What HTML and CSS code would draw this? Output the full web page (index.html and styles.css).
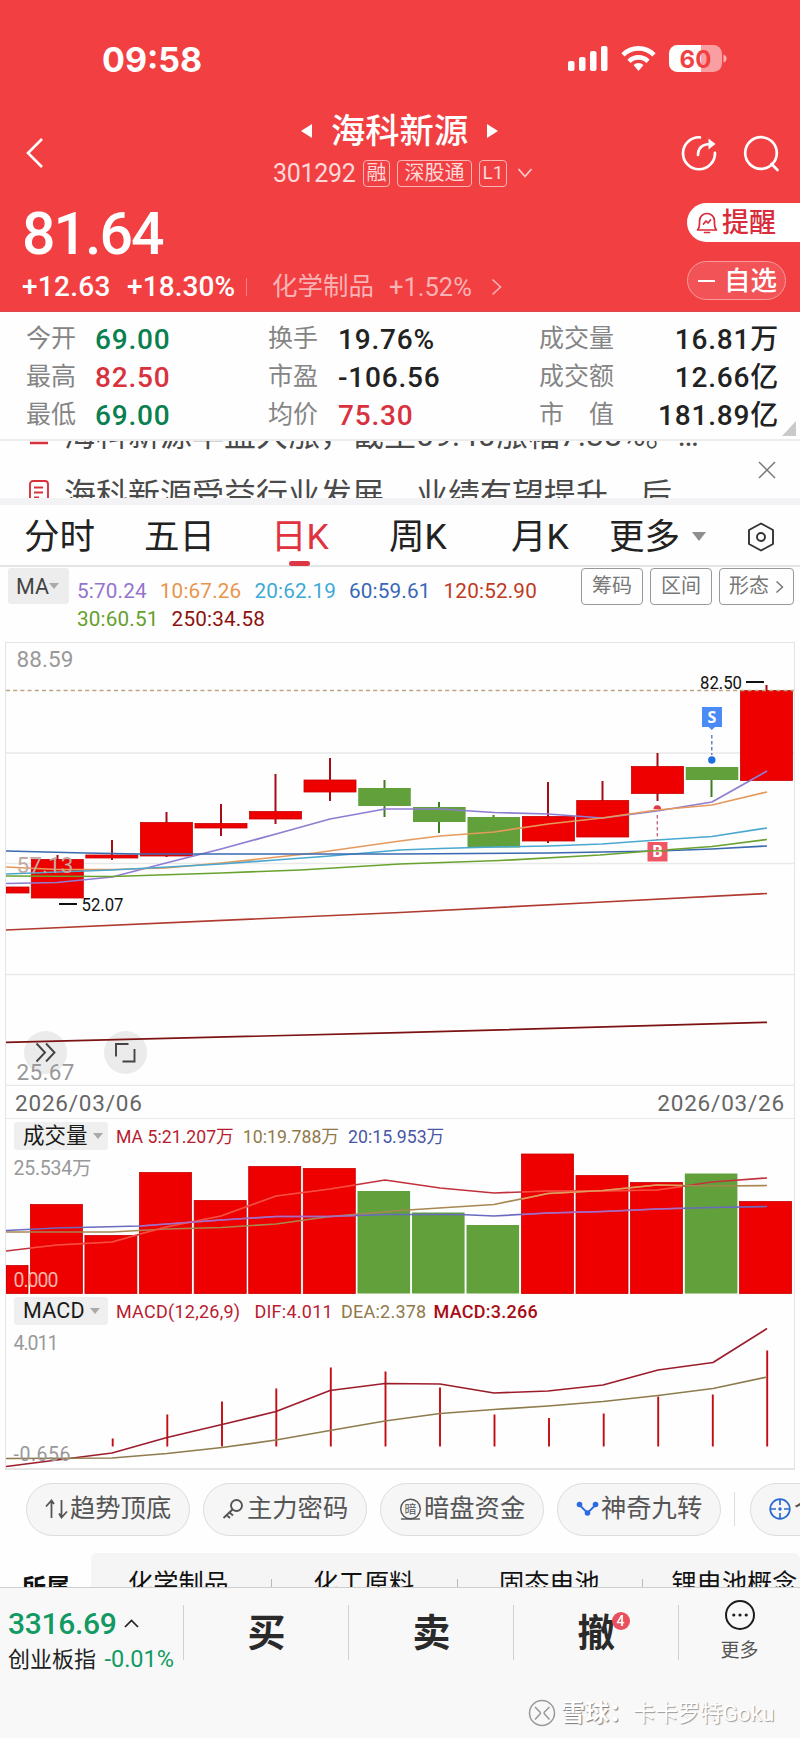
FILE: index.html
```html
<!DOCTYPE html>
<html lang="zh-CN">
<head>
    <meta charset="UTF-8">
    <meta name="viewport" content="width=device-width, initial-scale=1.0">
    <title>海科新源 301292</title>
    <link rel="stylesheet" href="styles.css">
</head>
<body>

<header class="top">
    <div class="status">
        <span class="clock">09:58</span>
        <svg class="status-icons" width="160" height="30" viewBox="567 44 160 30">
            <g fill="#fff">
                <rect x="568" y="61" width="6.500" height="10" rx="2"/>
                <rect x="579" y="57" width="6.500" height="14" rx="2"/>
                <rect x="590" y="51" width="6.500" height="20" rx="2"/>
                <rect x="601" y="46" width="6.500" height="25" rx="2"/>
                <path d="M638.500 71l-5-6a7.500 7.500 0 0 1 10 0z"/>
                <rect x="669" y="45" width="53" height="27" rx="8.500" opacity=".5"/>
                <path d="M677.500 45H701v27h-23.500a8.500 8.500 0 0 1-8.500-8.500v-10a8.500 8.500 0 0 1 8.500-8.500z"/>
                <path d="M723.500 54.500q3 1 3 4t-3 4z" opacity=".6"/>
            </g>
            <g fill="none" stroke="#fff" stroke-width="4.600">
                <path d="M623 54.800a22 22 0 0 1 31 0"/>
                <path d="M629 61.300a13.500 13.500 0 0 1 19 0"/>
            </g>
            <text x="695.500" y="67.500" class="battery-text">60</text>
        </svg>
    </div>

    <div class="nav">
        <svg class="back" width="20" height="32" viewBox="0 0 20 32"><path d="M17 2L3 16l14 14" fill="none" stroke="#fff" stroke-width="2.600"/></svg>
        <div class="title">
            <div class="name">
                <svg width="13" height="16" viewBox="0 0 13 16"><path d="M12 1v14L1 8z" fill="#fff"/></svg>
                <h1>海科新源</h1>
                <svg width="13" height="16" viewBox="0 0 13 16"><path d="M1 1v14l11-7z" fill="#fff"/></svg>
            </div>
            <div class="code">
                <span class="num">301292</span>
                <span class="tag">融</span>
                <span class="tag tag-wide">深股通</span>
                <span class="tag tag-l1">L1</span>
                <svg width="16" height="12" viewBox="0 0 16 12"><path d="M1.500 2L8 9.500 14.500 2" fill="none" stroke="#fbc9ca" stroke-width="1.800"/></svg>
            </div>
        </div>
        <svg class="nav-icons" width="100" height="38" viewBox="679 135 100 38">
            <g fill="none" stroke="#fff" stroke-width="2.700" stroke-linecap="round" stroke-linejoin="round">
                <path d="M699 137.300a16 16 0 1 0 15 15.500"/>
                <path d="M697 155c0-7.500 4-11 13.500-11"/>
                <circle cx="760" cy="153" r="15.800"/>
                <path d="M770.500 164l6 6"/>
            </g>
            <path d="M707.500 138.500l7 5.500-7 5.500z" fill="#fff"/>
        </svg>
    </div>

    <div class="quote">
        <div class="quote-main">
            <div class="price">81.64</div>
            <div class="change">
                <span class="diff">+12.63</span>
                <span class="pct">+18.30%</span>
                <span class="bar"></span>
                <span class="sector">化学制品</span>
                <span class="sector-pct">+1.52%</span>
                <svg width="11" height="18" viewBox="0 0 11 18"><path d="M1.500 1.500L9.500 9l-8 7.500" fill="none" stroke="#f9b3b4" stroke-width="1.600"/></svg>
            </div>
        </div>
        <div class="quote-side">
            <div class="remind">
                <svg width="22" height="22" viewBox="0 0 22 22"><g fill="none" stroke="#d92b3a" stroke-width="1.700" stroke-linecap="round" stroke-linejoin="round"><path d="M1.500 18h19c-1.500-1.500-2-3-2-6V9a7.500 7.500 0 0 0-15 0v3c0 3-.5 4.500-2 6z"/><path d="M7.500 12l2.500-3 2 2 2.500-3M8.500 20.500h5"/></g></svg>
                <span>提醒</span>
            </div>
            <div class="watch"><i class="minus"></i><span>自选</span></div>
        </div>
    </div>
</header>

<section class="stats">
    <span class="label">今开</span><span class="value green">69.00</span>
    <span class="label">换手</span><span class="value">19.76%</span>
    <span class="label">成交量</span><span class="value end">16.81万</span>
    <span class="label">最高</span><span class="value red">82.50</span>
    <span class="label">市盈</span><span class="value">-106.56</span>
    <span class="label">成交额</span><span class="value end">12.66亿</span>
    <span class="label">最低</span><span class="value green">69.00</span>
    <span class="label">均价</span><span class="value red">75.30</span>
    <span class="label">市　值</span><span class="value end">181.89亿</span>
    <i class="corner"></i>
</section>

<section class="news">
    <div class="news-list">
        <div class="news-row">
            <svg width="22" height="26" viewBox="0 0 22 26"><path d="M2 24h18" stroke="#d8323f" stroke-width="2.500"/></svg>
            <span>海科新源早盘大涨，截至09:40涨幅7.38%。…</span>
        </div>
        <div class="news-row">
            <svg width="22" height="26" viewBox="0 0 22 26"><g fill="none" stroke="#d8323f" stroke-width="1.900"><path d="M2 26V5a3 3 0 0 1 3-3h12a3 3 0 0 1 3 3v21M6 8.500h9M6 13.500h9M6 18.500h5"/></g></svg>
            <span>海科新源受益行业发展，业绩有望提升，后</span>
        </div>
    </div>
    <svg class="close" width="18" height="18" viewBox="0 0 18 18"><path d="M1 1l16 16M17 1L1 17" stroke="#777" stroke-width="1.500"/></svg>
</section>

<nav class="tabs">
    <span class="tab">分时</span>
    <span class="tab">五日</span>
    <span class="tab active">日K</span>
    <span class="tab">周K</span>
    <span class="tab">月K</span>
    <span class="tab">更多</span>
    <i class="caret"></i>
    <svg class="gear" width="28" height="30" viewBox="0 0 28 30"><g fill="none" stroke="#333" stroke-width="1.900" stroke-linejoin="round"><path d="M14 1.500L26 8v14l-12 6.500L2 22V8z"/><circle cx="14" cy="15" r="4"/></g></svg>
</nav>

<section class="ma">
    <span class="ma-btn">MA<i class="caret small"></i></span>
    <div class="ma-list">
        <span class="ma5">5:70.24</span>
        <span class="ma10">10:67.26</span>
        <span class="ma20">20:62.19</span>
        <span class="ma60">60:59.61</span>
        <span class="ma120">120:52.90</span>
        <span class="ma30">30:60.51</span>
        <span class="ma250">250:34.58</span>
    </div>
    <div class="ma-tools">
        <span class="tool">筹码</span>
        <span class="tool">区间</span>
        <span class="tool wide">形态 <svg width="9" height="14" viewBox="0 0 9 14"><path d="M1.500 1.500L7.500 7l-6 5.500" fill="none" stroke="#777" stroke-width="1.500"/></svg></span>
    </div>
</section>

<section class="charts">
    <!-- K line -->
    <svg class="chart" width="788" height="443" viewBox="6 643 788 443">
        <g stroke="#e9e9e9" stroke-width="1.300">
            <path d="M6 753h788M6 863.500h788M6 974.500h788M6 1085.300h788"/>
        </g>
        <circle cx="45.500" cy="1052.500" r="21.500" fill="#ebebeb"/>
        <circle cx="125.500" cy="1052.500" r="21.500" fill="#ebebeb"/>
        <g stroke="#a30d16" stroke-width="2">
            <path d="M57.500 855v5M112 840v20M166.500 812v45M221 804v32M275.500 774v50M330 758v43M548 782v61M602.500 781v20M657.500 753v48M766.500 685v6"/>
        </g>
        <g stroke="#3f7d22" stroke-width="2">
            <path d="M384.500 780v37M439 802v31M493.500 815v4M711.500 779v18"/>
        </g>
        <g fill="#ee0000" stroke="#c80000" stroke-width=".8">
            <rect x="6" y="887" width="23" height="6"/>
            <rect x="31.300" y="859.500" width="52" height="38.500"/>
            <rect x="85.800" y="855" width="52" height="3"/>
            <rect x="140.400" y="822.500" width="52" height="33.500"/>
            <rect x="195" y="823.500" width="52" height="4.500"/>
            <rect x="249.500" y="811.500" width="52" height="7.500"/>
            <rect x="304" y="780" width="52" height="12"/>
            <rect x="522.400" y="816.500" width="52" height="24.500"/>
            <rect x="576.700" y="800.500" width="52" height="36.500"/>
            <rect x="631.500" y="766.500" width="52" height="27"/>
            <rect x="740.500" y="690.500" width="52" height="90"/>
        </g>
        <g fill="#61a03a">
            <rect x="358.200" y="788" width="52.600" height="18"/>
            <rect x="413" y="807" width="52.600" height="15"/>
            <rect x="467.500" y="817" width="52.600" height="30.500"/>
            <rect x="685.700" y="767" width="52.600" height="13"/>
        </g>
        <path d="M6 690.500h788" stroke="#bca384" stroke-width="1.600" stroke-dasharray="4 3.200"/>
        <g fill="none" stroke-width="1.700" stroke-linejoin="round">
            <polyline stroke="#8f7cd3" points="6,883.500 57,882.500 112,877 166,863 221,849 276,834 330,819 385,809 440,809 494,812.500 548,814 603,818 657,811 712,802 767,771"/>
            <polyline stroke="#e59a5c" points="6,867 57,869.500 112,869.500 166,868 221,863 315,853 400,841 440,836 494,832 548,824 602,818 657,810 712,805 767,792"/>
            <polyline stroke="#4aa8d0" points="6,874 84,871 112,870 150,868 221,864 276,860 330,856 400,850 440,848.500 494,847 548,846 602,844 657,840 712,836.500 767,828"/>
            <polyline stroke="#3a69b2" points="6,851 85,853 140,854 300,854 400,854 548,853 657,851 712,849 767,846"/>
            <polyline stroke="#69a32f" points="6,876 112,876.500 221,873 300,870 400,864 500,860.500 600,855 657,850.500 712,846.500 767,839.500"/>
            <polyline stroke="#b03a30" points="6,930 400,912.500 584,903 767,893.500"/>
            <polyline stroke="#7d1212" points="6,1042.300 400,1032.700 767,1022.300"/>
        </g>
        <g class="axis axis-k">
            <text x="16.500" y="666.500" textLength="57">88.59</text>
            <text x="16.500" y="873" textLength="57" class="on-candle">57.13</text>
            <text x="16.500" y="1080" textLength="58">25.67</text>
        </g>
        <path d="M59 904h18M746 682h18" stroke="#111" stroke-width="2"/>
        <g class="mark">
            <text x="81.500" y="910.500" textLength="42" lengthAdjust="spacingAndGlyphs">52.07</text>
            <text x="700" y="689" textLength="42" lengthAdjust="spacingAndGlyphs">82.50</text>
        </g>
        <path d="M711.800 735v20" stroke="#5a6fb0" stroke-width="1.300" stroke-dasharray="3.500 2.500"/>
        <path d="M657.300 815v25" stroke="#c0607c" stroke-width="1.300" stroke-dasharray="3.500 2.500"/>
        <path d="M702 707h20v20h-7l-3.200 3-3.200-3H702z" fill="#4a8bf5"/>
        <circle cx="711.800" cy="760" r="3.700" fill="#1f70e0"/>
        <path d="M653.500 809a3.800 3.800 0 0 1 7.600 0z" fill="#e0384a"/>
        <rect x="647.500" y="842" width="20" height="19.500" fill="#ee5766"/>
        <text class="flag" x="711.800" y="722.500">S</text>
        <text class="flag" x="657.300" y="857">B</text>
        <path d="M647 850.800h20" stroke="#69a32f" stroke-width="1.400"/>
        <g fill="none" stroke="#444" stroke-width="1.900">
            <path d="M36.500 1043.500l8.500 9-8.500 9M46 1043.500l8.500 9-8.500 9"/>
            <path d="M128.500 1044H116v12.500M122.500 1061.500h12V1049"/>
        </g>
    </svg>

    <div class="dates"><span>2026/03/06</span><span>2026/03/26</span></div>

    <div class="sub-head">
        <span class="sub-btn">成交量<i class="caret small"></i></span>
        <span class="c-red">MA 5:21.207万</span>
        <span class="c-brown">10:19.788万</span>
        <span class="c-blue">20:15.953万</span>
    </div>
    <!-- volume -->
    <svg class="chart" width="788" height="143" viewBox="6 1151 788 143">
        <g fill="#ee0000" stroke="#c80000" stroke-width=".8">
            <rect x="6" y="1265.500" width="22" height="28"/>
            <rect x="30.400" y="1204.500" width="52" height="89"/>
            <rect x="84.900" y="1235.500" width="52" height="58"/>
            <rect x="139.500" y="1172.500" width="52" height="121"/>
            <rect x="194.200" y="1200.500" width="52" height="93"/>
            <rect x="248.700" y="1166.500" width="52" height="127"/>
            <rect x="303.300" y="1168.500" width="52" height="125"/>
            <rect x="521.500" y="1154" width="52" height="139.500"/>
            <rect x="576" y="1175.500" width="52" height="118"/>
            <rect x="630.500" y="1182.500" width="52" height="111"/>
            <rect x="739.600" y="1201.500" width="52" height="92"/>
        </g>
        <g fill="#61a03a">
            <rect x="357.500" y="1191" width="52.600" height="102.500"/>
            <rect x="412" y="1212.500" width="52.600" height="81"/>
            <rect x="466.500" y="1225" width="52.600" height="68.500"/>
            <rect x="684.800" y="1173.500" width="52.600" height="120"/>
        </g>
        <g fill="none" stroke-width="1.700" stroke-linejoin="round">
            <polyline stroke="#c2313c" points="6,1251 57,1245 112,1242 166,1227 221,1216 276,1196 330,1189 385,1180 440,1188 494,1193 548,1191 603,1191 657,1190 712,1182 767,1178"/>
            <polyline stroke="#a88750" points="6,1232 112,1232 166,1229 221,1227.500 276,1224 330,1216.500 400,1210.500 494,1204.500 548,1193.500 603,1190.500 657,1185 712,1186 767,1185.500"/>
            <polyline stroke="#6a6ac0" points="6,1230.500 57,1228 140,1226 221,1220 276,1216.500 330,1216.500 385,1214.500 460,1214.500 494,1216 548,1213 603,1211.500 657,1209 712,1207.500 767,1206.500"/>
        </g>
        <!-- lighter strokes where the averages run over red bars -->
        <g fill="none" stroke-width="1.500" stroke-linejoin="round">
            <polyline stroke="#ff4a3c" points="30,1248 57,1245 112,1242 137,1235"/>
            <polyline stroke="#ff4a3c" points="140,1234 166,1227 221,1216 276,1196 330,1189 355,1185"/>
            <polyline stroke="#ff4a3c" points="522,1192 548,1191 603,1191 657,1190 682,1186.500"/>
            <polyline stroke="#e59a5c" points="522,1199 548,1193.500 603,1190.500 657,1185 682,1185.500"/>
            <polyline stroke="#b06ac0" points="522,1214.500 548,1213 603,1211.500 657,1209 682,1208.300"/>
            <polyline stroke="#b06ac0" points="140,1226 221,1220 276,1216.500 330,1216.500 355,1215.500"/>
        </g>
        <g class="axis axis-sub">
            <text x="13.500" y="1175" textLength="78">25.534万</text>
            <text x="13.500" y="1286.500" textLength="45" class="on-bar">0.000</text>
        </g>
    </svg>

    <div class="sub-head macd-head">
        <span class="sub-btn">MACD<i class="caret small"></i></span>
        <span class="c-red">MACD(12,26,9)</span>
        <span class="c-red dif">DIF:4.011</span>
        <span class="c-brown dea">DEA:2.378</span>
        <span class="c-dark">MACD:3.266</span>
    </div>
    <!-- MACD -->
    <svg class="chart" width="788" height="142" viewBox="6 1326.500 788 142">
        <path d="M112.700 1439v8M167.300 1415v32M222 1402v45M276.300 1389v58M330.800 1368v79M385.500 1372v75M440 1388v59M494.500 1415v32M549 1418.500v28.500M603.700 1414v33M658.200 1397v50M712.800 1395v52M767.200 1351v96" stroke="#c40c12" stroke-width="1.900"/>
        <g fill="none" stroke-width="1.700" stroke-linejoin="round">
            <polyline stroke="#9d1c2c" points="6,1467 112,1453.500 167,1438 222,1425 276,1412 330,1391 385,1384 440,1384.500 494,1393.500 548,1391.500 603,1385.500 658,1370.500 713,1363 767,1329"/>
            <polyline stroke="#8f7c4e" points="6,1459 112,1458.500 167,1454 222,1448 276,1440.500 330,1431 385,1421.500 440,1414 494,1410 548,1406.500 603,1402 658,1396 713,1389 767,1377.500"/>
        </g>
        <g class="axis axis-sub">
            <text x="13.500" y="1350" textLength="45">4.011</text>
            <text x="13.500" y="1461.500" textLength="57">-0.656</text>
        </g>
    </svg>
</section>

<section class="pills">
    <span class="pill"><svg width="24" height="20" viewBox="0 0 24 20"><path d="M6.500 19V2M1 7.500l5.500-6L9 5M16.500 1v17M14 14.500l2.500 4 5.500-6" fill="none" stroke="#555" stroke-width="1.800"/></svg><span>趋势顶底</span></span>
    <span class="pill"><svg width="24" height="22" viewBox="0 0 24 22"><g fill="none" stroke="#555" stroke-width="1.900"><circle cx="14.500" cy="7.500" r="5.500"/><path d="M10.500 11.500L1.500 20M4.500 17l3.500 3M7.500 14.500l3.500 3"/></g></svg><span>主力密码</span></span>
    <span class="pill"><svg width="24" height="22" viewBox="0 0 24 22"><g fill="none" stroke="#555" stroke-width="1.400"><circle cx="11.500" cy="11" r="9.800"/><path d="M2 21h19"/></g><text x="11.500" y="15.500" class="pill-char">暗</text></svg><span>暗盘资金</span></span>
    <span class="pill"><svg width="24" height="16" viewBox="0 0 24 16"><path d="M3.500 4l8 8 8-8" fill="none" stroke="#2b6be0" stroke-width="1.800"/><g fill="#2b6be0"><circle cx="3.500" cy="3.500" r="2.800"/><circle cx="11.500" cy="12" r="2.800"/><circle cx="19.500" cy="3.500" r="2.800"/></g></svg><span>神奇九转</span></span>
    <span class="pill-sep"></span>
    <span class="pill last"><svg width="24" height="22" viewBox="0 0 24 22"><g fill="none" stroke="#2b6bd0" stroke-width="1.700"><circle cx="11" cy="11" r="9.800"/><path d="M11 1v6M11 15v6M1 11h6M15 11h6"/></g><circle cx="11" cy="11" r="1.700" fill="#2b6bd0"/></svg><span>个股</span></span>
</section>

<section class="boards">
    <span class="belong">所属</span>
    <div class="board-list">
        <span>化学制品</span>
        <span>化工原料</span>
        <span>固态电池</span>
        <span>锂电池概念</span>
    </div>
</section>

<footer class="trade">
    <div class="trade-row">
        <div class="index">
            <div class="index-num">3316.69<svg width="15" height="9" viewBox="0 0 15 9"><path d="M1 8l6.500-6.500L14 8" fill="none" stroke="#222" stroke-width="1.700"/></svg></div>
            <div class="index-name">创业板指 <span>-0.01%</span></div>
        </div>
        <div class="act">买</div>
        <div class="act">卖</div>
        <div class="act"><span class="cancel">撤<i class="badge">4</i></span></div>
        <div class="more">
            <svg width="32" height="32" viewBox="0 0 32 32"><circle cx="16" cy="16" r="14" fill="none" stroke="#1c1c1c" stroke-width="2"/><g fill="#1c1c1c"><circle cx="9.800" cy="16" r="1.600"/><circle cx="16" cy="16" r="1.600"/><circle cx="22.200" cy="16" r="1.600"/></g></svg>
            <span>更多</span>
        </div>
    </div>
    <div class="watermark">
        <svg width="28" height="28" viewBox="0 0 28 28"><g fill="none" stroke-width="1.500" stroke="#999"><circle cx="14" cy="14" r="12.500"/><path d="M7 8l5 5q1 1 0 2l-5 5.500M21.500 8l-5 5q-1 1 0 2l5 5.500"/></g></svg>
        <span class="wm-brand">雪球：</span><span class="wm-user">卡卡罗特Goku</span>
    </div>
</footer>

</body>
</html>
```
FILE: styles.css
```css
* {
    box-sizing: border-box;
}
body {
    margin: 0;
    width: 800px;
    height: 1738px;
    overflow: hidden;
    background-color: #fefefe;
    color: #222;
    font-family: Roboto, "Noto Sans CJK SC", sans-serif;
    white-space: nowrap;
}
svg {
    display: block;
    flex: none;
}
i {
    font-style: normal;
}
h1 {
    margin: 0;
}

/* header */
.top {
    height: 312px;
    background-color: #f23f42;
    color: #fff;
    border-bottom: 1px solid #d9474a;
}
.status {
    display: flex;
    justify-content: space-between;
    height: 112px;
    padding: 44px 73px 0 102px;
}
.clock {
    font: bold 34px/31px Inter, sans-serif;
}
.status-icons {
    overflow: visible;
}
.battery-text {
    font: bold 24px Inter, sans-serif;
    fill: #f23f42;
    text-anchor: middle;
}
.nav {
    display: flex;
    height: 80px;
    padding: 0 20px 0 25px;
}
.back {
    margin-top: 25px;
}
.title {
    width: 280px;
    margin-left: 223px;
}
.name {
    display: flex;
    align-items: center;
    gap: 18px;
    height: 38px;
    padding-left: 32px;
}
.name h1 {
    font-size: 34.300px;
    font-weight: 500;
    line-height: 38px;
}
.code {
    display: flex;
    align-items: center;
    height: 28px;
    margin-top: 9px;
    padding-left: 5px;
    color: #fdd9da;
}
.code .num {
    width: 90px;
    font-size: 25px;
    letter-spacing: -0.300px;
}
.tag {
    width: 27px;
    height: 27px;
    margin-right: 7px;
    border: 1.500px solid #fab5b6;
    border-radius: 4px;
    font-size: 20px;
    line-height: 24px;
    text-align: center;
}
.tag-wide {
    width: 75px;
}
.code .tag-l1 {
    width: 28px;
    font-size: 19px;
}
.code svg {
    margin-left: 3px;
}
.tag-l1 {
    margin-right: 7px;
}
.nav-icons {
    margin: 23px 0 0 auto;
}
.quote {
    display: flex;
    justify-content: space-between;
    height: 119px;
}
.quote-main {
    padding-left: 22px;
}
.price {
    height: 76px;
    font-size: 59px;
    font-weight: 500;
    line-height: 83px;
    letter-spacing: -2px;
}
.change {
    display: flex;
    align-items: center;
    height: 38px;
    font-size: 28px;
    line-height: 36px;
}
.diff {
    width: 105px;
    font-weight: 500;
    letter-spacing: 0.300px;
}
.pct {
    width: 119px;
    font-weight: 500;
    letter-spacing: 0.100px;
}
.bar {
    width: 1px;
    height: 18px;
    margin-right: 25px;
    background-color: #f77f81;
}
.sector {
    width: 117px;
    margin-top: -2px;
    color: #f9b3b4;
    font-size: 25.500px;
}
.sector-pct {
    width: 102px;
    color: #f9b3b4;
    font-size: 25.500px;
}
.quote-side {
    width: 113px;
    padding-top: 11px;
}
.remind {
    display: flex;
    align-items: center;
    gap: 4px;
    height: 39px;
    padding-left: 9px;
    border-radius: 20px 0 0 20px;
    background-color: #fff;
    color: #d92b3a;
    font-size: 27px;
    font-weight: 500;
    line-height: 34px;
}
.watch {
    display: flex;
    align-items: center;
    gap: 9px;
    width: 99px;
    height: 39px;
    margin-top: 19px;
    padding-left: 10px;
    border: 1px solid #f99a9c;
    border-radius: 20px;
    background-color: #f15357;
    font-size: 26.500px;
    font-weight: 500;
    line-height: 34px;
}
.minus {
    width: 17px;
    height: 2px;
    background-color: #fff;
}

/* key numbers */
.stats {
    position: relative;
    display: grid;
    grid-template-columns: 69px 173px 70px 201px 75px 165px;
    grid-auto-rows: 38px;
    align-items: center;
    height: 129px;
    padding: 9px 0 0 26px;
    border-bottom: 2px solid #ececec;
    line-height: 36px;
}
.label {
    margin-top: -2px;
    color: #858585;
    font-size: 25px;
}
.value {
    font-size: 28px;
    font-weight: 500;
    letter-spacing: 0.800px;
}
.end {
    text-align: right;
}
.green {
    color: #0a8050;
}
.red {
    color: #d8323f;
}
.corner {
    position: absolute;
    right: 4px;
    bottom: 3px;
    border-left: 14px solid transparent;
    border-bottom: 15px solid #c9c9c9;
}

/* news ticker */
.news {
    display: flex;
    justify-content: space-between;
    height: 64px;
    padding-right: 24px;
    overflow: hidden;
    border-bottom: 7px solid #f3f3f5;
}
.news-list {
    margin-top: -39px;
    padding-left: 28px;
}
.news-row {
    display: flex;
    align-items: center;
    gap: 14px;
    height: 60px;
    color: #4a4a4a;
    font-size: 32px;
}
.close {
    margin-top: 20px;
}

/* period tabs */
.tabs {
    display: flex;
    align-items: center;
    height: 62px;
    padding: 3px 0 0 24px;
    border-bottom: 2px solid #e4e4e4;
    font-size: 35.500px;
}
.tab {
    position: relative;
    width: 120px;
    line-height: 50px;
}
.tab:nth-child(2) {
    width: 127px;
}
.tab:nth-child(3) {
    width: 118px;
}
.tab:nth-child(4) {
    width: 122px;
}
.tab:nth-child(5) {
    width: 98px;
}
.tab:nth-child(6) {
    width: 83px;
}
.active {
    color: #e0333f;
}
.active::after {
    content: "";
    position: absolute;
    left: 18px;
    bottom: -4px;
    width: 21px;
    height: 5px;
    border-radius: 3px;
    background-color: #dd3644;
}
.caret {
    border: 7px solid transparent;
    border-top: 9px solid #8f8f8f;
    border-bottom: 0;
}
.small {
    border-width: 6px 5px 0;
    border-top-color: #aaa;
}
.gear {
    margin-left: 41px;
}

/* moving average row */
.ma {
    display: flex;
    height: 75px;
    padding: 1px 6px 0 8px;
}
.ma-btn {
    display: flex;
    align-items: center;
    width: 61px;
    height: 36px;
    padding-left: 8px;
    border-radius: 3px;
    background-color: #ededed;
    color: #444;
    font-size: 21.500px;
}
.ma-list {
    display: flex;
    flex-wrap: wrap;
    column-gap: 13px;
    align-content: flex-start;
    width: 480px;
    margin: 9px 0 0 8px;
    font-size: 20.700px;
    line-height: 28px;
    letter-spacing: 0.170px;
}
.ma5 {
    color: #9474cc;
}
.ma10 {
    color: #e8954d;
}
.ma20 {
    color: #3fa9d6;
}
.ma60 {
    color: #3866b8;
}
.ma120 {
    color: #c03a22;
}
.ma30 {
    color: #64a02c;
}
.ma250 {
    color: #8c1210;
}
.ma-tools {
    display: flex;
    gap: 7px;
    margin-left: auto;
}
.tool {
    width: 62px;
    height: 37px;
    border: 1px solid #999;
    border-radius: 4px;
    color: #777;
    font-size: 20px;
    line-height: 35px;
    text-align: center;
}
.ma-tools .wide {
    display: flex;
    align-items: center;
    justify-content: center;
    gap: 6px;
    width: 75px;
}

/* charts */
.charts {
    height: 828px;
    margin: 0 5px;
    border: 1px solid #e4e4e4;
    border-bottom-width: 2px;
}
.axis {
    fill: #999;
}
.axis-k {
    font-size: 22.500px;
}
.axis-sub {
    font-size: 19.500px;
}
.on-candle {
    fill: #c2a8a4;
}
.on-bar {
    fill: #f7b5a8;
}
.mark {
    fill: #111;
    font-size: 18.500px;
}
.flag {
    fill: #fff;
    font: bold 16px "Open Sans", sans-serif;
    text-anchor: middle;
}
.dates {
    display: flex;
    justify-content: space-between;
    height: 33px;
    padding: 0 9px;
    border-bottom: 1px solid #e9e9e9;
    color: #666;
    font-size: 22.500px;
    line-height: 34px;
    letter-spacing: 0.800px;
}
.sub-head {
    display: flex;
    align-items: center;
    height: 32px;
    padding: 3px 0 0 8px;
    font-size: 17.700px;
    line-height: 26px;
}
.macd-head {
    font-size: 18px;
    letter-spacing: 0.250px;
}
.sub-btn {
    display: flex;
    align-items: center;
    gap: 5px;
    width: 94px;
    height: 28px;
    margin: -1px 8px 0 0;
    padding-left: 9px;
    border-radius: 3px;
    background-color: #efefef;
    color: #1a1a1a;
    font-size: 21.500px;
}
.c-red {
    color: #b81c30;
}
.c-brown {
    color: #90794a;
    margin-left: 9px;
}
.c-blue {
    color: #4857a6;
    margin-left: 9px;
}
.c-dark {
    color: #a80c14;
    margin-left: 7px;
    font-weight: 500;
}
.dif {
    margin-left: 14px;
}
.dea {
    margin-left: 8px;
}

/* shortcut pills */
.pills {
    display: flex;
    align-items: center;
    height: 83px;
    padding: 0 0 5px 26px;
    overflow: hidden;
}
.pill {
    display: flex;
    flex: none;
    align-items: center;
    gap: 1px;
    width: 164px;
    height: 53px;
    margin-right: 13px;
    padding-left: 18px;
    border: 1px solid #dcdcdc;
    border-radius: 27px;
    background-color: #f6f6f6;
    color: #555;
    font-size: 25.300px;
    line-height: 36px;
}
.pill-char {
    fill: #555;
    font-size: 12px;
    text-anchor: middle;
}
.pill-sep {
    flex: none;
    width: 1px;
    height: 34px;
    margin-right: 15px;
    background-color: #ddd;
}

/* boards */
.boards {
    display: flex;
    height: 34px;
    overflow: hidden;
    color: #111;
}
.belong {
    flex: none;
    width: 91px;
    padding: 17px 0 0 22px;
    font-size: 24px;
    font-weight: bold;
    line-height: 36px;
}
.board-list {
    display: flex;
    flex: none;
    width: 709px;
    height: 60px;
    border-radius: 6px;
    background-color: #f5f5f5;
    font-size: 25.200px;
    line-height: 36px;
}
.board-list span {
    flex: none;
    width: 185.500px;
    padding: 13px 0 0 37px;
}
.board-list span:not(:last-child) {
    background: linear-gradient(#bbb, #bbb) 180px 26px / 1px 20px no-repeat;
}
.board-list span:last-child {
    width: 152px;
    padding-left: 24px;
}

/* bottom bar */
.trade {
    height: 151px;
    border-top: 1px solid #cfcfcf;
    background-color: #f8f8f8;
}
.trade-row {
    display: flex;
    height: 72px;
    padding-top: 17px;
}
.index {
    width: 183px;
    padding-left: 8px;
}
.index-num {
    display: flex;
    align-items: center;
    gap: 7px;
    height: 36px;
    color: #129a62;
    font-size: 30px;
    font-weight: 500;
    letter-spacing: -0.300px;
}
.index-name {
    margin-top: 4px;
    font-size: 22px;
    line-height: 28px;
}
.index-name span {
    margin-left: 3px;
    color: #129a62;
    font-size: 23.500px;
}
.act {
    width: 165px;
    height: 55px;
    padding-left: 1px;
    border-left: 1px solid #d0d0d0;
    color: #2a2a2a;
    font-size: 38px;
    font-weight: bold;
    line-height: 57px;
    text-align: center;
}
.cancel {
    position: relative;
}
.badge {
    position: absolute;
    top: 1px;
    right: -14px;
    width: 18px;
    height: 18px;
    border-radius: 50%;
    background-color: #e94f5c;
    color: #fff;
    font-size: 14px;
    font-weight: 500;
    line-height: 18px;
}
.more {
    display: flex;
    flex-direction: column;
    align-items: center;
    width: 122px;
    height: 55px;
    border-left: 1px solid #d0d0d0;
    color: #555;
    font-size: 19px;
    line-height: 26px;
}
.more svg {
    margin: -6px 0 7px;
}
.watermark {
    display: flex;
    align-items: center;
    height: 32px;
    margin-top: 37px;
    padding-left: 528px;
    color: #fff;
    font-size: 22.400px;
    line-height: 30px;
    text-shadow: 1px 1px 1px #999;
}
.wm-brand {
    margin-left: 5px;
    font-size: 24px;
    font-weight: bold;
    text-shadow: 1px 1px 1px #777;
}
```
